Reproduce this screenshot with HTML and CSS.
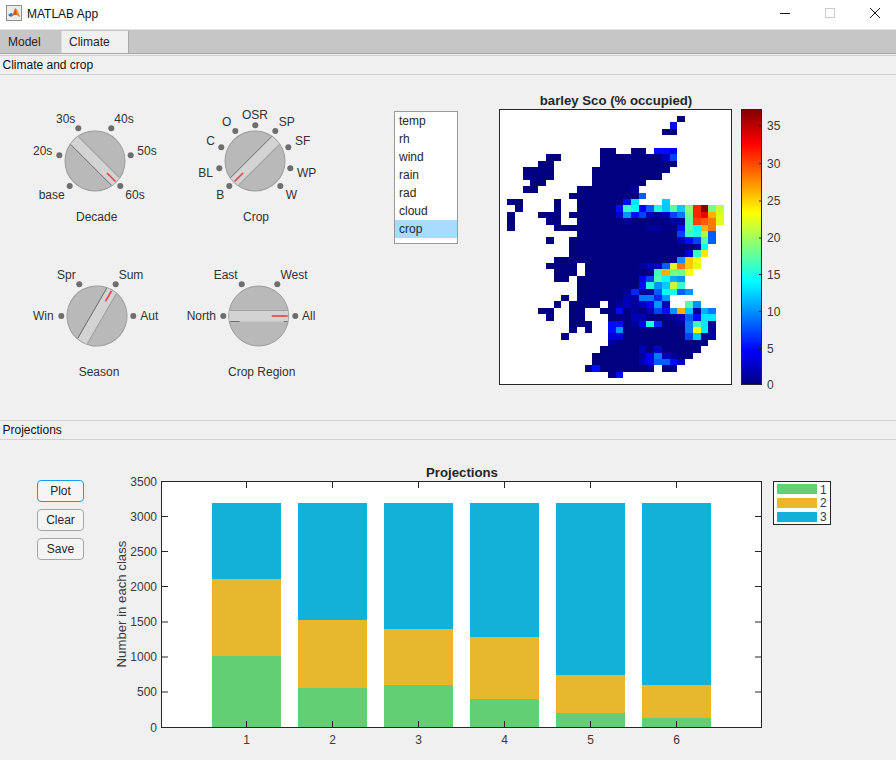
FILE: index.html
```html
<!DOCTYPE html>
<html lang="en">

<head>
    <meta charset="UTF-8">
    <meta name="viewport" content="width=device-width, initial-scale=1.0">
    <title>MATLAB App</title>
    <link rel="stylesheet" href="styles.css">
</head>

<body>
    <div class="titlebar">
        <svg class="app-icon" width="16" height="16" viewBox="0 0 16 16">
            <rect x="0.5" y="0.5" width="15" height="15" fill="#ececec" stroke="#8f8f8f" />
            <polygon points="2,10 5,8 7,9 5,12" fill="#2f6fb5" />
            <polygon points="5,12 7,9 9,3 11,5 14,12 11,10 8,10" fill="#d9541e" />
            <polygon points="9,3 11,5 14,12 11,10" fill="#f0902a" />
        </svg>
        <span class="app-name">MATLAB App</span>
        <div class="window-controls">
            <div class="window-control"><span class="ctl-min"></span></div>
            <div class="window-control"><span class="ctl-max"></span></div>
            <div class="window-control">
                <svg width="10" height="10" viewBox="0 0 10 10">
                    <path d="M0 0L10 10M10 0L0 10" stroke="#1a1a1a" stroke-width="1" fill="none" />
                </svg>
            </div>
        </div>
    </div>

    <div class="tabs">
        <div class="tab tab-model">Model</div>
        <div class="tab tab-active">Climate</div>
    </div>

    <!-- upper panel -->
    <div class="panel-title panel-title-first">Climate and crop</div>
    <div class="panel-body climate-body">
        <div class="knobs">
            <svg class="knob" width="160" height="160" viewBox="0 0 160 160">
                <g transform="translate(79 66) rotate(45)">
                    <circle class="knob-face" r="30" />
                    <rect class="knob-band" x="-29.5" y="-5.5" width="59" height="11" />
                    <line class="knob-edge-light" x1="-29" y1="-5.5" x2="29" y2="-5.5" />
                    <line class="knob-edge-dark" x1="-29" y1="5.5" x2="29" y2="5.5" />
                    <line class="knob-mark" x1="17" y1="0" x2="29" y2="0" />
                </g>
                <circle class="knob-dot" cx="62.3" cy="33.3" r="3" />
                <circle class="knob-dot" cx="95.3" cy="33.3" r="3" />
                <circle class="knob-dot" cx="114.7" cy="60.3" r="3" />
                <circle class="knob-dot" cx="104.3" cy="91" r="3" />
                <circle class="knob-dot" cx="53.7" cy="91" r="3" />
                <circle class="knob-dot" cx="43.3" cy="60.3" r="3" />
                <text x="49.7" y="23.7">30s</text>
                <text x="108" y="23.7">40s</text>
                <text x="131" y="56">50s</text>
                <text x="119" y="100">60s</text>
                <text x="35.7" y="100">base</text>
                <text x="26.7" y="56">20s</text>
                <text x="80.7" y="121.7">Decade</text>
            </svg>

            <svg class="knob" width="160" height="160" viewBox="0 0 160 160">
                <g transform="translate(79 66) rotate(135)">
                    <circle class="knob-face" r="30" />
                    <rect class="knob-band" x="-29.5" y="-5.5" width="59" height="11" />
                    <line class="knob-edge-light" x1="-29" y1="-5.5" x2="29" y2="-5.5" />
                    <line class="knob-edge-dark" x1="-29" y1="5.5" x2="29" y2="5.5" />
                    <line class="knob-mark" x1="17" y1="0" x2="29" y2="0" />
                </g>
                <circle class="knob-dot" cx="53.3" cy="91" r="3" />
                <circle class="knob-dot" cx="43.3" cy="73.3" r="3" />
                <circle class="knob-dot" cx="45.3" cy="52.3" r="3" />
                <circle class="knob-dot" cx="59.3" cy="36" r="3" />
                <circle class="knob-dot" cx="79.3" cy="30.3" r="3" />
                <circle class="knob-dot" cx="99.3" cy="36" r="3" />
                <circle class="knob-dot" cx="112.3" cy="52.3" r="3" />
                <circle class="knob-dot" cx="114.3" cy="73.3" r="3" />
                <circle class="knob-dot" cx="104.3" cy="91" r="3" />
                <text x="79" y="20">OSR</text>
                <text x="50.7" y="26.7">O</text>
                <text x="110.7" y="26.7">SP</text>
                <text x="34.7" y="45.7">C</text>
                <text x="126.7" y="45.7">SF</text>
                <text x="29.7" y="77.7">BL</text>
                <text x="130.7" y="77.7">WP</text>
                <text x="44.3" y="100">B</text>
                <text x="115.3" y="100">W</text>
                <text x="80" y="121.7">Crop</text>
            </svg>

            <svg class="knob" width="160" height="160" viewBox="0 0 160 160">
                <g transform="translate(81 61) rotate(-60)">
                    <circle class="knob-face" r="30" />
                    <rect class="knob-band" x="-29.5" y="-5.5" width="59" height="11" />
                    <line class="knob-edge-dark" x1="-29" y1="-5.5" x2="29" y2="-5.5" />
                    <line class="knob-edge-light" x1="-29" y1="5.5" x2="29" y2="5.5" />
                    <line class="knob-mark" x1="17" y1="0" x2="29" y2="0" />
                </g>
                <circle class="knob-dot" cx="45.3" cy="61" r="3" />
                <circle class="knob-dot" cx="63.3" cy="29.3" r="3" />
                <circle class="knob-dot" cx="99.7" cy="29.3" r="3" />
                <circle class="knob-dot" cx="117.3" cy="61" r="3" />
                <text x="50.3" y="20">Spr</text>
                <text x="115" y="20">Sum</text>
                <text x="27.3" y="61">Win</text>
                <text x="133.3" y="61">Aut</text>
                <text x="83" y="116.7">Season</text>
            </svg>

            <svg class="knob" width="160" height="160" viewBox="0 0 160 160">
                <g transform="translate(82.7 61)">
                    <circle class="knob-face" r="30" />
                    <rect class="knob-band" x="-29.5" y="-5.5" width="59" height="11" />
                    <line class="knob-edge-light" x1="-29" y1="-5.5" x2="29" y2="-5.5" />
                    <line class="knob-edge-dark" x1="-29" y1="5.5" x2="-19" y2="5.5" />
                    <line class="knob-edge-dark" x1="25" y1="5.5" x2="29" y2="5.5" />
                    <line class="knob-mark" x1="13" y1="0" x2="29" y2="0" />
                </g>
                <circle class="knob-dot" cx="47.3" cy="61" r="3" />
                <circle class="knob-dot" cx="65.7" cy="29.3" r="3" />
                <circle class="knob-dot" cx="101.3" cy="29.3" r="3" />
                <circle class="knob-dot" cx="119.3" cy="61" r="3" />
                <text x="49.7" y="20">East</text>
                <text x="118" y="20">West</text>
                <text x="25.3" y="61">North</text>
                <text x="132.7" y="61">All</text>
                <text x="85.7" y="116.7">Crop Region</text>
            </svg>
        </div>

        <div class="listbox">
            <div class="list-item">temp</div>
            <div class="list-item">rh</div>
            <div class="list-item">wind</div>
            <div class="list-item">rain</div>
            <div class="list-item">rad</div>
            <div class="list-item">cloud</div>
            <div class="list-item list-item-selected">crop</div>
        </div>

        <svg class="plot heat-plot" width="300" height="310" viewBox="490 85 300 310">
            <defs>
                <linearGradient id="jet" x1="0" y1="0" x2="0" y2="1">
                    <stop offset="0" stop-color="#800000" />
                    <stop offset="0.125" stop-color="#ff0000" />
                    <stop offset="0.375" stop-color="#ffff00" />
                    <stop offset="0.625" stop-color="#00ffff" />
                    <stop offset="0.875" stop-color="#0000ff" />
                    <stop offset="1" stop-color="#000080" />
                </linearGradient>
            </defs>
            <text class="plot-title" x="616" y="100">barley Sco (% occupied)</text>
            <rect x="499.5" y="109.5" width="232" height="275" fill="#ffffff" />
            <g id="cells" shape-rendering="crispEdges"></g>
            <rect class="axes-box" x="499.5" y="109.5" width="232" height="275" />

            <rect x="741.5" y="109.5" width="20" height="275" fill="url(#jet)" stroke="#262626" />
            <path class="tick" d="M759 126H761M759 163.5H761M759 201H761M759 238H761M759 274.5H761M759 311.5H761M759 348.5H761" />
            <text class="label-left" x="767" y="126">35</text>
            <text class="label-left" x="767" y="163.5">30</text>
            <text class="label-left" x="767" y="201">25</text>
            <text class="label-left" x="767" y="238">20</text>
            <text class="label-left" x="767" y="274.5">15</text>
            <text class="label-left" x="767" y="311.5">10</text>
            <text class="label-left" x="767" y="348.5">5</text>
            <text class="label-left" x="767" y="384.5">0</text>
        </svg>
    </div>

    <!-- lower panel -->
    <div class="panel-title">Projections</div>
    <div class="panel-body projections-body">
        <div class="buttons">
            <button class="btn btn-focus">Plot</button>
            <button class="btn">Clear</button>
            <button class="btn">Save</button>
        </div>

        <svg class="plot bar-plot" width="750" height="300" viewBox="100 460 750 300">
            <text class="plot-title" x="462" y="472">Projections</text>
            <rect x="161.5" y="481.5" width="600" height="246" fill="#ffffff" />

            <g shape-rendering="crispEdges">
                <rect class="bar-blue" x="212" y="503" width="69" height="76" />
                <rect class="bar-yellow" x="212" y="579" width="69" height="77" />
                <rect class="bar-green" x="212" y="656" width="69" height="71" />

                <rect class="bar-blue" x="298" y="503" width="69" height="117" />
                <rect class="bar-yellow" x="298" y="620" width="69" height="68" />
                <rect class="bar-green" x="298" y="688" width="69" height="39" />

                <rect class="bar-blue" x="384" y="503" width="69" height="126" />
                <rect class="bar-yellow" x="384" y="629" width="69" height="56" />
                <rect class="bar-green" x="384" y="685" width="69" height="42" />

                <rect class="bar-blue" x="470" y="503" width="69" height="134" />
                <rect class="bar-yellow" x="470" y="637" width="69" height="62" />
                <rect class="bar-green" x="470" y="699" width="69" height="28" />

                <rect class="bar-blue" x="556" y="503" width="69" height="172" />
                <rect class="bar-yellow" x="556" y="675" width="69" height="38" />
                <rect class="bar-green" x="556" y="713" width="69" height="14" />

                <rect class="bar-blue" x="642" y="503" width="69" height="182" />
                <rect class="bar-yellow" x="642" y="685" width="69" height="33" />
                <rect class="bar-green" x="642" y="718" width="69" height="9" />
            </g>

            <rect class="axes-box" x="161.5" y="481.5" width="600" height="246" />
            <path class="tick" d="M162 516.5H168M162 551.5H168M162 586.5H168M162 622H168M162 657H168M162 692H168
                M761 516.5H755M761 551.5H755M761 586.5H755M761 622H755M761 657H755M761 692H755
                M246.5 727V721M332.5 727V721M418.5 727V721M504.5 727V721M590.5 727V721M676.5 727V721
                M246.5 482V488M332.5 482V488M418.5 482V488M504.5 482V488M590.5 482V488M676.5 482V488" />

            <text class="label-right" x="157" y="481.5">3500</text>
            <text class="label-right" x="157" y="516.5">3000</text>
            <text class="label-right" x="157" y="551.5">2500</text>
            <text class="label-right" x="157" y="586.5">2000</text>
            <text class="label-right" x="157" y="622">1500</text>
            <text class="label-right" x="157" y="657">1000</text>
            <text class="label-right" x="157" y="692">500</text>
            <text class="label-right" x="157" y="728">0</text>

            <text class="label-mid" x="246.5" y="740">1</text>
            <text class="label-mid" x="332.5" y="740">2</text>
            <text class="label-mid" x="418.5" y="740">3</text>
            <text class="label-mid" x="504.5" y="740">4</text>
            <text class="label-mid" x="590.5" y="740">5</text>
            <text class="label-mid" x="676.5" y="740">6</text>

            <text class="label-mid y-label" transform="translate(121 604) rotate(-90)">Number in each class</text>

            <!-- legend -->
            <rect class="legend-box" x="773.5" y="481.5" width="57" height="43" />
            <rect class="bar-green" x="777" y="484" width="40" height="10" />
            <rect class="bar-yellow" x="777" y="498" width="40" height="10" />
            <rect class="bar-blue" x="777" y="512" width="40" height="10" />
            <text class="label-left" x="820" y="489.5">1</text>
            <text class="label-left" x="820" y="503">2</text>
            <text class="label-left" x="820" y="516.5">3</text>
        </svg>
    </div>

    <script src="heatmap.js"></script>
</body>

</html>
```

FILE: styles.css
```css
* {
    box-sizing: border-box;
}

html,
body {
    margin: 0;
    width: 896px;
    height: 760px;
    overflow: hidden;
}

body {
    background-color: #f0f0f0;
    font-family: "Liberation Sans", Arial, sans-serif;
    font-size: 12px;
    color: #262626;
}

.titlebar {
    display: flex;
    align-items: center;
    height: 30px;
    padding-left: 6px;
    background-color: #ffffff;
    border-bottom: 1px solid #e2e2e2;
}

.app-icon {
    margin-top: -4px;
}

.app-name {
    margin-left: 5px;
    margin-top: -1px;
    font-size: 12px;
    color: #111111;
}

.window-controls {
    display: flex;
    margin-left: auto;
    margin-right: -1px;
}

.window-control {
    display: flex;
    align-items: center;
    justify-content: center;
    width: 45px;
    height: 29px;
    margin-top: -3px;
}

.ctl-min {
    width: 10px;
    height: 1px;
    background-color: #1a1a1a;
}

.ctl-max {
    width: 10px;
    height: 10px;
    border: 1px solid #cccccc;
}

.tabs {
    display: flex;
    height: 24px;
    background-color: #c6c6c6;
    border-bottom: 1px solid #a8a8a8;
}

.tab {
    line-height: 25px;
    padding-left: 8px;
}

.tab-model {
    width: 61px;
}

.tab-active {
    width: 68px;
    margin-top: 1px;
    padding-left: 7px;
    line-height: 23px;
    background-color: #f0f0f0;
    border-left: 1px solid #dcdcdc;
    border-right: 1px solid #a8a8a8;
}

.panel-title {
    height: 20px;
    line-height: 19px;
    padding-left: 2.5px;
    border-top: 1px solid #d0d0d0;
    border-bottom: 1px solid #d0d0d0;
    color: #111111;
}

.panel-title-first {
    margin-top: 1px;
}

.panel-body {
    display: flex;
}

.climate-body {
    height: 345px;
    padding: 20px 0 0 16px;
}

.knobs {
    display: grid;
    grid-template-columns: 160px 160px;
    align-content: start;
    width: 320px;
}

.knob {
    display: block;
}

.knob text {
    font-size: 12px;
    fill: #333333;
    text-anchor: middle;
    dominant-baseline: central;
}

.knob-face {
    fill: #b9b9b9;
    stroke: #9c9c9c;
}

.knob-band {
    fill: #d3d3d3;
}

.knob-edge-light {
    stroke: #a0a0a0;
}

.knob-edge-dark {
    stroke: #5c5c5c;
    stroke-width: 0.8;
}

.knob-mark {
    stroke: #e8413f;
    stroke-width: 1.6;
}

.knob-dot {
    fill: #6e6e6e;
}

.listbox {
    width: 64px;
    height: 133px;
    margin-left: 58px;
    margin-top: 16px;
    padding-bottom: 6px;
    background-color: #ffffff;
    border: 1px solid #9a9a9a;
}

.list-item {
    height: 18px;
    line-height: 18px;
    padding-left: 4px;
}

.list-item-selected {
    background-color: #a8dcff;
}

.plot {
    display: block;
}

.plot text {
    font-size: 12px;
    fill: #3a3a3a;
    dominant-baseline: central;
}

.plot .plot-title {
    font-size: 13.2px;
    font-weight: bold;
    fill: #262626;
    text-anchor: middle;
}

.plot .label-left {
    text-anchor: start;
}

.plot .label-right {
    text-anchor: end;
}

.plot .label-mid {
    text-anchor: middle;
}

.plot .y-label {
    font-size: 13.2px;
}

.heat-plot {
    margin-left: 32px;
    margin-top: -10px;
}

.axes-box,
.legend-box {
    fill: none;
    stroke: #262626;
}

.legend-box {
    fill: #ffffff;
}

.tick {
    fill: none;
    stroke: #262626;
}

.bar-green {
    fill: #62cf74;
}

.bar-yellow {
    fill: #e8b82c;
}

.bar-blue {
    fill: #12b2d8;
}

.projections-body {
    height: 320px;
    padding: 20px 0 0 0;
}

.buttons {
    display: flex;
    flex-direction: column;
    gap: 7px;
    width: 100px;
    padding: 20px 0 0 37px;
}

.btn {
    width: 47px;
    height: 22px;
    padding: 0;
    font-family: inherit;
    font-size: 12px;
    color: #262626;
    background-color: #f5f5f5;
    border: 1px solid #a6a6a6;
    border-radius: 4px;
}

.btn-focus {
    border-color: #1a9bf0;
}
```

FILE: heatmap.js
```js
// one string per map row: "startColumn:values", values index into LEVELS
var LEVELS = '0123456789abcdefghijklmnopqrstuvwxyzAB';
var MAX_LEVEL = 37;
var CELL_W = 232 / 30;
var CELL_H = 275 / 43;

var rows = [
    '',
    '23:0',
    '22:5',
    '21:00',
    '',
    '',
    '13:00 17:00 20:554',
    '6:00 13:0000000027',
    '5:00 13:0000000000',
    '3:0000 12:0000000000',
    '3:0000 12:000000000',
    '4:00 12:0000000',
    '3:00 10:00000001',
    '9:000000000 18:8',
    '1:00 7:0 10:0000005d 21:c',
    '2:0 7:0 10:00000 15:5ge48fchcjvBil',
    '1:0 5:000 9:000000 15:3a5721279ivxqm',
    '1:0 6:00 10:000000 16:10000011hutsm',
    '1:0 7:000000000000 19:1100 23:5heqs',
    '10:0000000000000 23:7gfk8',
    '6:0 9:00000000000000 23:257h8',
    '9:0000000000000000 25:1e',
    '9:000000000000000 24:3go',
    '7:0000000000000000 23:apn',
    '6:0000 11:0000000 18:1228mspm',
    '7:000 11:000000000 20:gqiin',
    '7:00 10:00000000 18:47heba',
    '10:00000000 18:5faclg',
    '10:000000 16:16118ef8a',
    '8:0 10:000000 16:21996a',
    '7:0 9:0000 14:012124a2 24:ha',
    '5:00 9:00 13:00 15:5010275aqc1b9',
    '6:0 9:00 14:000220001285dd',
    '9:000 14:55014f60019gd1',
    '9:0 11:0 14:5a000000009nd1',
    '8:0 14:33000000007c11',
    '14:1000000000000',
    '13:00000203 21:00000',
    '12:000000 18:1492100',
    '12:000000 18:248852',
    '11:05 13:0000000 21:00',
    '14:05',
    ''
];

function jetPart(x) {
    return Math.round(255 * Math.max(0, Math.min(1, 1.5 - Math.abs(x))));
}

function jet(t) {
    return 'rgb(' + jetPart(4 * t - 3) + ',' + jetPart(4 * t - 2) + ',' + jetPart(4 * t - 1) + ')';
}

var cells = document.getElementById('cells');

rows.forEach(function(row, r) {
    if (!row) return;
    row.split(' ').forEach(function(seg) {
        var parts = seg.split(':');
        var start = parseInt(parts[0], 10);
        for (var i = 0; i < parts[1].length; i++) {
            var rect = document.createElementNS('http://www.w3.org/2000/svg', 'rect');
            rect.setAttribute('x', 499.5 + (start + i) * CELL_W);
            rect.setAttribute('y', 109.5 + r * CELL_H);
            rect.setAttribute('width', CELL_W);
            rect.setAttribute('height', CELL_H);
            rect.setAttribute('fill', jet(LEVELS.indexOf(parts[1][i]) / MAX_LEVEL));
            cells.appendChild(rect);
        }
    });
});
```
